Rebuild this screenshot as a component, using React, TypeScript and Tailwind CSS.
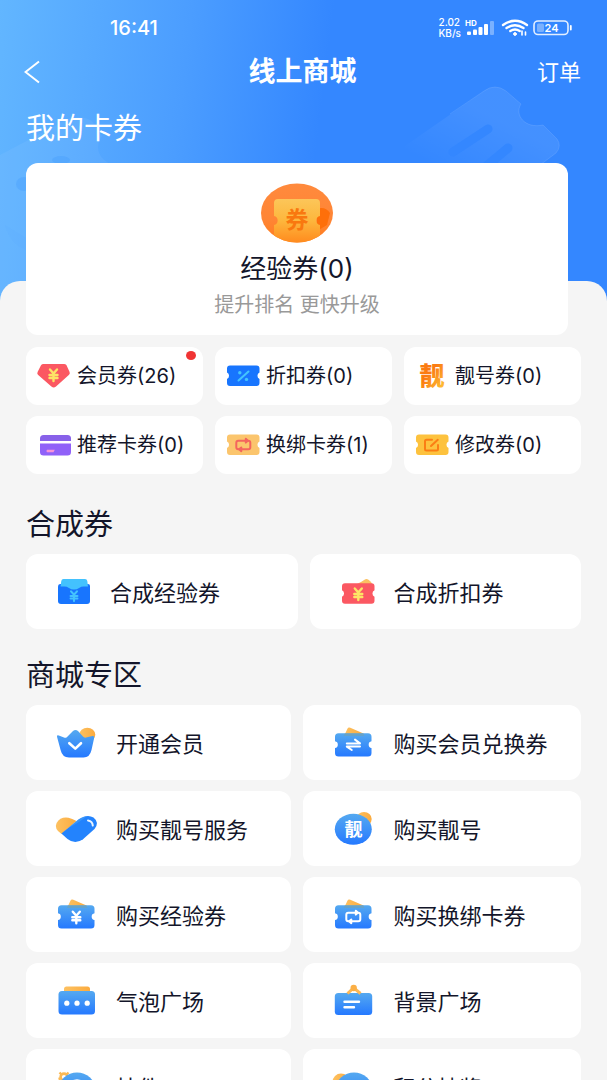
import type { ReactNode } from "react";

type Item = { label: string; icon: ReactNode; dot?: boolean };

const YEN = "M-3.5 -5.5 L0 -1.5 L3.5 -5.5 M-4 0 H4 M-4 3 H4 M0 -1.5 V6";

// ticket outline with a round notch on each side
const SMALL_TICKET =
  "M4 2.5 H30.5 Q33.5 2.5 33.5 5.5 V9.5 A3.6 3.6 0 0 0 33.5 16 V20 Q33.5 23 30.5 23 H4 Q1 23 1 20 V16 A3.6 3.6 0 0 0 1 9.5 V5.5 Q1 2.5 4 2.5 Z";
const BIG_TICKET =
  "M5.5 7.3 H35 Q38.5 7.3 38.5 10.8 V15.3 A3.4 3.4 0 0 0 38.5 22 V27 Q38.5 30.5 35 30.5 H5.5 Q2 30.5 2 27 V22 A3.4 3.4 0 0 0 2 15.3 V10.8 Q2 7.3 5.5 7.3 Z";

function Gradients() {
  return (
    <svg className="absolute h-0 w-0" aria-hidden="true">
      <defs>
        <linearGradient id="blue" x1="0" y1="0" x2="0" y2="1">
          <stop offset="0" stopColor="#55a9f0" />
          <stop offset="1" stopColor="#2579ff" />
        </linearGradient>
        <linearGradient id="gold" x1="0" y1="0" x2="1" y2="0">
          <stop offset="0" stopColor="#fdc161" />
          <stop offset="1" stopColor="#fbab3e" />
        </linearGradient>
        <linearGradient id="orangeText" x1="0" y1="0" x2="1" y2="1">
          <stop offset="0.4" stopColor="#fb7b12" />
          <stop offset="1" stopColor="#fecb3c" />
        </linearGradient>
        <linearGradient id="coin" x1="0" y1="0" x2="0" y2="1">
          <stop offset="0" stopColor="#ff8a3d" />
          <stop offset="0.6" stopColor="#ff8535" />
          <stop offset="1" stopColor="#ff7d1c" />
        </linearGradient>
        <linearGradient id="coinTicket" x1="0" y1="0" x2="0" y2="1">
          <stop offset="0" stopColor="#fcc659" />
          <stop offset="0.5" stopColor="#fdb63c" />
          <stop offset="1" stopColor="#ff8a1e" />
        </linearGradient>
        <linearGradient id="fade" x1="0" y1="1" x2="0.6" y2="0.4">
          <stop offset="0.2" stopColor="#fff" stopOpacity="0" />
          <stop offset="1" stopColor="#fff" stopOpacity="0.08" />
        </linearGradient>
      </defs>
    </svg>
  );
}

function SmallIcon({ children }: { children: ReactNode }) {
  return (
    <svg viewBox="0 0 34 26" className="h-[26px] w-[34px] shrink-0 overflow-visible" fill="none" aria-hidden="true">
      {children}
    </svg>
  );
}

function BigIcon({ children }: { children: ReactNode }) {
  return (
    <svg viewBox="0 0 42 34" className="h-[34px] w-[42px] shrink-0 overflow-visible" fill="none" aria-hidden="true">
      {children}
    </svg>
  );
}

function BlueTicket({ children }: { children: ReactNode }) {
  return (
    <BigIcon>
      <path d="M11.5 9 L14.3 3 Q15.2 1 17.3 1.8 L30.5 7.5 V9 Z" fill="url(#gold)" />
      <path d={BIG_TICKET} fill="url(#blue)" />
      <path d="M11.8 7.3 H30.3 L31.5 10 H10.8 Z" fill="#7d9f9e" opacity="0.45" />
      {children}
    </BigIcon>
  );
}

function Loop({ color }: { color: string }) {
  return (
    <g stroke={color} strokeWidth="2" strokeLinecap="round" strokeLinejoin="round">
      <path d="M-4 4.5 H-5 Q-7 4.5 -7 2.5 V-2 Q-7 -4 -5 -4 H4" />
      <path d="M4 -4 H5 Q7 -4 7 -2 V2.5 Q7 4.5 5 4.5 H-3" />
      <path d="M2.5 -6 L4.5 -4 L2.5 -2.2 Z M-2 2.6 L-4.2 4.5 L-2 6.4 Z" fill={color} />
    </g>
  );
}

const coupons: Item[] = [
  {
    label: "会员券(26)",
    dot: true,
    icon: (
      <SmallIcon>
        <path d="M6.5 1 H27 Q28.5 1 29.4 2 L32.6 9 Q33.3 10.8 31.8 12 L19 23.6 Q16.7 25.5 14.4 23.6 L1.2 12 Q-0.3 10.8 0.6 9 L4 2.2 Q4.8 1 6.5 1 Z" fill="#fb5862" />
        <path d={YEN} transform="translate(16.5 12)" stroke="#fde466" strokeWidth="2.4" strokeLinecap="round" />
      </SmallIcon>
    ),
  },
  {
    label: "折扣券(0)",
    icon: (
      <SmallIcon>
        <path d={SMALL_TICKET} fill="#1875fe" />
        <path d="M12.5 17.5 L22.5 8.5" stroke="#44c4fd" strokeWidth="2" strokeLinecap="round" />
        <circle cx="13.8" cy="9.8" r="1.7" fill="#44c4fd" />
        <circle cx="20.5" cy="16.4" r="1.7" fill="#44c4fd" />
      </SmallIcon>
    ),
  },
  {
    label: "靓号券(0)",
    icon: (
      <SmallIcon>
        <text x="17" y="22" textAnchor="middle" className="text-[25px] font-black" fill="url(#orangeText)">靓</text>
      </SmallIcon>
    ),
  },
  {
    label: "推荐卡券(0)",
    icon: (
      <SmallIcon>
        <path d="M3 9 V6.5 Q3 3 6.5 3 H30.5 Q34 3 34 6.5 V9 Z" fill="#8861e9" />
        <path d="M3 11.5 H34 V20 Q34 23.5 30.5 23.5 H6.5 Q3 23.5 3 20 Z" fill="#9061f8" />
        <path d="M10 17.7 H17.8 L16.5 20.3 H10 Q8.7 19 10 17.7 Z" fill="#f793d9" />
      </SmallIcon>
    ),
  },
  {
    label: "换绑卡券(1)",
    icon: (
      <SmallIcon>
        <path d={SMALL_TICKET} fill="#fbc56d" />
        <g transform="translate(17.3 12.8)">
          <Loop color="#f4655e" />
        </g>
      </SmallIcon>
    ),
  },
  {
    label: "修改券(0)",
    icon: (
      <SmallIcon>
        <path d={SMALL_TICKET} fill="#fdc23e" />
        <path d="M17 7.8 H11.5 Q10 7.8 10 9.3 V17 Q10 18.5 11.5 18.5 H21.5 Q23 18.5 23 17 V13" stroke="#fb7e14" strokeWidth="2" strokeLinecap="round" />
        <path d="M16 14 L22.8 7.8" stroke="#fb7e14" strokeWidth="2" strokeLinecap="round" />
      </SmallIcon>
    ),
  },
];

const compose: Item[] = [
  {
    label: "合成经验券",
    icon: (
      <SmallIcon>
        <path d="M3 5 H31 Q33 5 33 7 V22 Q33 25 30 25 H4 Q1 25 1 22 V7.5 Q1 5 3 5 Z" fill="#1875fe" />
        <path d="M6.5 0 H28 Q30 0 30.3 2 L31 7.5 H26.5 Q24 7.5 22.5 8.7 Q17 12.5 11.5 8.7 Q10 7.5 7.5 7.5 H3.5 L4.3 2 Q4.6 0 6.5 0 Z" fill="#43c2fe" />
        <path d={YEN} transform="translate(17 17) scale(0.85)" stroke="#43c2fe" strokeWidth="2.5" strokeLinecap="round" />
      </SmallIcon>
    ),
  },
  {
    label: "合成折扣券",
    icon: (
      <SmallIcon>
        <path d="M16 5 Q21 2.5 23.5 0.7 Q25.5 -0.5 27.5 0.8 Q31 3 31.5 6 Z" fill="#fbc162" />
        <path d={SMALL_TICKET} fill="#fb5862" transform="translate(0 1.8)" />
        <path d={YEN} transform="translate(17.3 15)" stroke="#fde466" strokeWidth="2.4" strokeLinecap="round" />
      </SmallIcon>
    ),
  },
];

const mall: Item[] = [
  {
    label: "开通会员",
    icon: (
      <BigIcon>
        <ellipse cx="31.3" cy="8.7" rx="8" ry="7" fill="url(#gold)" />
        <path d="M1 10.8 Q0.8 8.8 2.8 9.5 L8 11.6 Q9.5 12.2 10.8 11.2 L17 5 Q19.5 3 22 5 L27 10.6 Q28.3 12 30 11.5 L36.5 10 Q38.6 9.6 38.2 11.8 L35.5 24 Q33.8 31.5 27.5 31.5 H13 Q6.3 31.5 4.6 24 Z" fill="url(#blue)" />
        <path d="M13.3 17.2 L19.3 22.6 L25 17.2" stroke="#fff" strokeWidth="2.6" strokeLinecap="round" strokeLinejoin="round" />
      </BigIcon>
    ),
  },
  {
    label: "购买会员兑换券",
    icon: (
      <BlueTicket>
        <path d="M13.8 17.4 H27 L22 13.6 M27 20.6 H13.8 L18.8 24" stroke="#fff" strokeWidth="2" strokeLinecap="round" strokeLinejoin="round" />
      </BlueTicket>
    ),
  },
  {
    label: "购买靓号服务",
    icon: (
      <BigIcon>
        <path d="M5.6 22 Q-2.2 17 0.6 11 Q4.5 4.5 12.5 5.8 Q16 6.5 20.5 9 Z" fill="url(#gold)" />
        <path d="M5.4 21.6 L22.5 7.5 Q31 1.5 37.5 5.5 Q43.8 10.5 38.5 17 L27 27.3 Q19 33 11.5 27 Z" fill="#2383fd" />
        <path d="M12 16.2 L22.5 7.5 Q27 4.2 31 4 Q24 10 12 16.2 Z" fill="#46a0f6" opacity="0.6" />
        <path d="M32 8.4 Q36.5 9 36.8 13.6" stroke="#e8f4ff" strokeWidth="2" strokeLinecap="round" />
      </BigIcon>
    ),
  },
  {
    label: "购买靓号",
    icon: (
      <BigIcon>
        <ellipse cx="31" cy="7" rx="7.7" ry="7" fill="url(#gold)" />
        <ellipse cx="20.3" cy="17.3" rx="18.5" ry="15.5" fill="url(#blue)" />
        <text x="20.6" y="24" textAnchor="middle" className="text-[18px] font-bold" fill="#fff">靓</text>
      </BigIcon>
    ),
  },
  {
    label: "购买经验券",
    icon: (
      <BlueTicket>
        <path d={YEN} transform="translate(20.3 19.2)" stroke="#fff" strokeWidth="2.4" strokeLinecap="round" />
      </BlueTicket>
    ),
  },
  {
    label: "购买换绑卡券",
    icon: (
      <BlueTicket>
        <g transform="translate(20.3 18.8)">
          <Loop color="#fff" />
        </g>
      </BlueTicket>
    ),
  },
  {
    label: "气泡广场",
    icon: (
      <BigIcon>
        <path d="M8 9 V5 Q8 2.5 10.5 2.5 H31.5 Q34 2.5 34 5 V9 Z" fill="url(#gold)" />
        <rect x="2.5" y="7" width="36.5" height="23.5" rx="3.5" fill="url(#blue)" />
        <circle cx="10.8" cy="19.2" r="2.6" fill="#fff" />
        <circle cx="21" cy="19.2" r="2.6" fill="#fff" />
        <circle cx="31.2" cy="19.2" r="2.6" fill="#fff" />
      </BigIcon>
    ),
  },
  {
    label: "背景广场",
    icon: (
      <BigIcon>
        <rect x="1.8" y="9" width="37.4" height="22" rx="3.5" fill="url(#blue)" />
        <path d="M14.5 9.5 L20.7 3.8 L27.5 9.5" stroke="#fdb855" strokeWidth="3" strokeLinejoin="round" />
        <circle cx="20.7" cy="4" r="3.2" fill="#fbaf45" />
        <path d="M11.5 17.8 H26 M11.5 23.3 H21" stroke="#fff" strokeWidth="2.4" strokeLinecap="round" />
      </BigIcon>
    ),
  },
  {
    label: "挂件",
    icon: (
      <BigIcon>
        <circle cx="8" cy="7" r="3.4" stroke="#fbb955" strokeWidth="2.6" />
        <path d="M3.5 2.5 L5.5 4.5 M12.5 2.5 L10.5 4.5 M2.5 9 L4.5 8.5" stroke="#fbb955" strokeWidth="2.4" />
        <ellipse cx="21" cy="18.5" rx="18" ry="16" fill="url(#blue)" />
        <ellipse cx="21" cy="19" rx="9" ry="8.5" stroke="#fff" strokeWidth="2.6" />
      </BigIcon>
    ),
  },
  {
    label: "积分抽奖",
    icon: (
      <BigIcon>
        <circle cx="8" cy="12" r="8.5" fill="url(#gold)" />
        <ellipse cx="21" cy="18.5" rx="18" ry="16" fill="url(#blue)" />
      </BigIcon>
    ),
  },
];

function StatusBar() {
  return (
    <div className="flex items-center justify-between pr-[34px] pl-[110px] pt-4">
      <time className="text-xl leading-6 font-medium">16:41</time>
      <div className="flex items-center">
        <div className="text-[10px] leading-[11px] font-medium">
          <p>2.02</p>
          <p>KB/s</p>
        </div>
        <svg viewBox="0 0 32 20" className="ml-1 h-5 w-8" fill="#fff" aria-hidden="true">
          <text x="0" y="8" className="text-[8px] font-bold">HD</text>
          <rect x="2" y="13.5" width="4" height="3.5" rx="1" />
          <rect x="8" y="11.5" width="4" height="5.5" rx="1" />
          <rect x="13.5" y="9" width="4" height="8" rx="1" />
          <rect x="19" y="6" width="4" height="11" rx="1" />
          <rect x="25" y="3" width="4" height="14" rx="1" opacity="0.35" />
        </svg>
        <svg viewBox="0 0 28 20" className="ml-1 h-5 w-7" fill="none" stroke="#fff" strokeWidth="2.4" strokeLinecap="round" aria-hidden="true">
          <path d="M2 7 Q14 -1.5 26 7 M5.5 10 Q14 4.5 22.5 10 M9.3 13 Q14 10 18.7 13" />
          <circle cx="14" cy="16" r="1.4" fill="#fff" strokeWidth="1" />
          <path d="M21 13 V17 M24.5 14 V17" strokeWidth="1.6" />
        </svg>
        <svg viewBox="0 0 40 16" className="ml-1 h-4 w-10" fill="none" aria-hidden="true">
          <rect x="1" y="1" width="34" height="13.5" rx="4" stroke="#e4efff" strokeWidth="1.6" />
          <rect x="4" y="3.5" width="7" height="8.5" rx="1.5" fill="#fff" opacity="0.35" />
          <path d="M37.8 6 V9.5" stroke="#fff" strokeWidth="1.8" strokeLinecap="round" />
          <text x="18.5" y="11.5" textAnchor="middle" className="text-[11px] font-semibold" fill="#fff">24</text>
        </svg>
      </div>
    </div>
  );
}

function HeaderArt() {
  return (
    <svg viewBox="0 0 607 301" preserveAspectRatio="xMidYMin slice" className="absolute inset-0 h-full w-full" fill="none" aria-hidden="true">
      <path d="M405 146 L484 91 Q495 83 506 91 L521 104 C514 115 525 129 543 125 L557 139 Q562 146 556 153 L536 168 H400 Z" fill="url(#fade)" />
      <path d="M450 114 L484 91 Q495 83 506 91 L521 104 C514 115 525 129 543 125 L557 139 Q562 146 556 153 L536 168" stroke="#fff" strokeOpacity="0.1" />
      <path d="M453 152 L488 129 M483 169 L508 148" stroke="#3487ff" strokeWidth="9" strokeLinecap="round" />
      <path d="M0 155 L68 119 Q80 114 92 121 L102 136 C94 148 99 159 111 164 L30 300 H0 Z" fill="#fff" opacity="0.05" />
      <ellipse cx="61" cy="160" rx="9" ry="4" fill="#3f97fb" opacity="0.3" />
      <ellipse cx="24" cy="184" rx="8" ry="7" fill="#3f97fb" opacity="0.3" />
      <path d="M5 225 L26 238 V250 Q10 244 5 225 Z" fill="#3f97fb" opacity="0.06" />
    </svg>
  );
}

function SectionTitle({ children }: { children: ReactNode }) {
  return <h2 className="font-['Noto_Sans_CJK_SC',sans-serif] text-[29px] leading-10">{children}</h2>;
}

export default function App() {
  return (
    <div className="h-screen overflow-y-auto bg-[#f5f5f5] font-['Inter','Noto_Sans_CJK_SC',sans-serif] text-[#13152a] [scrollbar-width:none]">
      <Gradients />
      <header className="relative h-[301px] bg-[linear-gradient(97deg,#62b6ff_0%,#4b9dff_30%,#3487ff_52%)] text-white">
        <HeaderArt />
        <div className="relative">
          <StatusBar />
          <nav className="mt-3.5 grid grid-cols-3 items-center pr-[26px] pl-6">
            <button type="button" aria-label="返回" className="w-4">
              <svg viewBox="0 0 16 24" className="h-6 w-4" fill="none" stroke="#fff" strokeWidth="2" aria-hidden="true">
                <path d="M15 1.5 L1.5 12 L15 22.5" />
              </svg>
            </button>
            <h1 className="text-center text-[27px] leading-9 font-bold">线上商城</h1>
            <a href="#orders" className="text-right text-[22px] leading-9">订单</a>
          </nav>
          <div className="mt-4 px-[26px]">
            <SectionTitle>我的卡券</SectionTitle>
          </div>
        </div>
      </header>

      <main className="relative -mt-5 flex flex-col rounded-t-[20px] bg-[#f5f5f5] px-[26px] pb-6">
        <section className="-mt-[118px] mr-[13px] flex h-[172px] flex-col items-center rounded-xl bg-white pt-5">
          <svg viewBox="0 0 72 60" className="h-[60px] w-[72px]" aria-hidden="true">
            <clipPath id="coinClip">
              <ellipse cx="36" cy="30" rx="36" ry="29.5" />
            </clipPath>
            <g clipPath="url(#coinClip)">
              <rect width="72" height="60" fill="url(#coin)" />
              <path d="M56 26 Q64 23 69 30 L66 42 L56 48 Z" fill="#fe6f0a" />
              <path d="M17 16 H55 Q59 16 59 20 V33 A4.6 4.6 0 0 0 59 42 V60 H13 V42 A4.6 4.6 0 0 0 13 33 V20 Q13 16 17 16 Z" fill="url(#coinTicket)" />
            </g>
            <text x="36" y="45" textAnchor="middle" className="text-[23px] font-bold" fill="#f9780f">券</text>
          </svg>
          <h3 className="mt-2 text-[26px] leading-9">经验券(0)</h3>
          <p className="mt-1 text-xl leading-7 text-[#999]">提升排名 更快升级</p>
        </section>

        <section className="mt-3 grid grid-cols-3 gap-x-3 gap-y-[11px]">
          {coupons.map((item) => (
            <button key={item.label} type="button" className="relative flex h-[58px] items-center gap-1.5 rounded-xl bg-white pl-[11px] text-xl whitespace-nowrap">
              {item.icon}
              {item.label}
              {item.dot && <span className="absolute top-1 right-[7px] h-[9px] w-2.5 rounded-[50%] bg-[#f03434]" />}
            </button>
          ))}
        </section>

        <section className="mt-7">
          <SectionTitle>合成券</SectionTitle>
          <div className="mt-3 grid grid-cols-2 gap-3">
            {compose.map((item) => (
              <button key={item.label} type="button" className="flex h-[75px] items-center gap-[19px] rounded-xl bg-white pl-[31px] font-['Noto_Sans_CJK_SC',sans-serif] text-[22px] whitespace-nowrap">
                {item.icon}
                {item.label}
              </button>
            ))}
          </div>
        </section>

        <section className="mt-6">
          <SectionTitle>商城专区</SectionTitle>
          <div className="mt-3 grid grid-cols-[265fr_277fr] gap-x-3 gap-y-[11px]">
            {mall.map((item) => (
              <button key={item.label} type="button" className="flex h-[75px] items-center gap-[18px] rounded-xl bg-white pl-[30px] font-['Noto_Sans_CJK_SC',sans-serif] text-[22px] whitespace-nowrap">
                {item.icon}
                {item.label}
              </button>
            ))}
          </div>
        </section>
      </main>
    </div>
  );
}
